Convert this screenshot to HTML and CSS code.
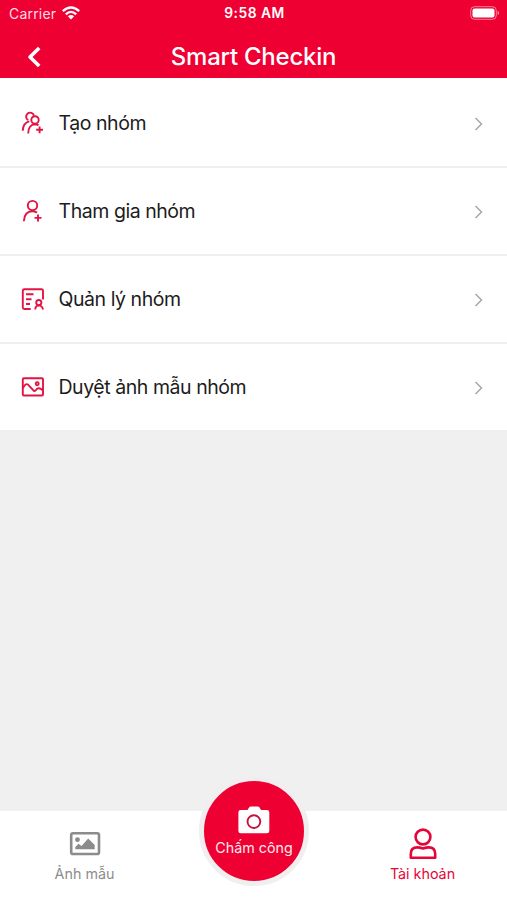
FILE: index.html
```html
<!DOCTYPE html>
<html lang="vi">
<head>
<meta charset="utf-8">
<title>Smart Checkin</title>
<link rel="stylesheet" href="styles.css">
</head>
<body>
<div class="app">
  <header class="header">
    <div class="status">
      <div class="carrier"><span>Carrier</span>
        <svg width="18" height="14" viewBox="0 0 18 14" fill="none" stroke="#fff" stroke-width="2.3"><path d="M.8 5.2Q9-2.2 17.2 5.2M3.8 8.3Q9 3.4 14.2 8.3"/><path d="M5.8 10.3Q9 7.5 12.2 10.3L9 13.6Z" fill="#fff" stroke="none"/></svg>
      </div>
      <span class="time">9:58 AM</span>
      <svg class="battery" width="30" height="14" viewBox="0 0 30 14"><rect x=".7" y=".7" width="25.6" height="12.6" rx="3.8" fill="none" stroke="#fff" stroke-opacity=".5"/><rect x="2.5" y="2.5" width="22" height="9" rx="2" fill="#fff"/><path d="M27.7 4.8Q30.6 7 27.7 9.2Z" fill="#fff" fill-opacity=".6"/></svg>
    </div>
    <div class="nav">
      <svg class="back" width="16" height="24" viewBox="0 0 16 24" fill="none" stroke="#fff" stroke-width="3.6" stroke-linejoin="round"><path d="M13.2 3L4 12l9.2 9"/></svg>
      <h1 class="title">Smart Checkin</h1>
    </div>
  </header>
  <main class="list">
    <div class="row">
      <svg class="icon" width="24" height="24" viewBox="0 0 24 24"><path d="M8.2 9.2A4 4 0 1 1 14 4.7M2.7 19.8C3 14.5 5 11.3 9.3 10.4M8.2 22.4C8.2 17 10.8 13.4 15 13.2Q17 13.2 18.5 14.3M19.6 15.4v6.8M16.2 18.8H23"/><circle cx="15" cy="8.9" r="3.7"/></svg>
      <span class="label">Tạo nhóm</span>
      <svg class="chevron" width="10" height="14" viewBox="0 0 10 14"><path d="M1.5 1l6 6-6 6"/></svg>
    </div>
    <div class="row">
      <svg class="icon" width="24" height="24" viewBox="0 0 24 24"><circle cx="12.5" cy="6.6" r="4.7"/><path d="M3.8 22.3C4.2 16 7.2 12.2 12.4 12.2Q15 12.2 17 13.6M18 15.4v7M14.5 18.9h7"/></svg>
      <span class="label">Tham gia nhóm</span>
      <svg class="chevron" width="10" height="14" viewBox="0 0 10 14"><path d="M1.5 1l6 6-6 6"/></svg>
    </div>
    <div class="row">
      <svg class="icon" width="24" height="24" viewBox="0 0 24 24"><path d="M10.7 22H4.3Q2.8 22 2.8 20.5V3.7Q2.8 2.2 4.3 2.2H21.5Q23 2.2 23 3.7V12.5M6 7.2h7.5M6 12.2h5.5M6 17h4M15.2 22.5q.2-3.8 3.6-4.1 3.6.3 4.2 4.1"/><circle cx="18.8" cy="15.6" r="2.6"/></svg>
      <span class="label">Quản lý nhóm</span>
      <svg class="chevron" width="10" height="14" viewBox="0 0 10 14"><path d="M1.5 1l6 6-6 6"/></svg>
    </div>
    <div class="row">
      <svg class="icon" width="24" height="24" viewBox="0 0 24 24"><rect x="2.8" y="3.2" width="20.2" height="17.3" rx="1"/><path d="M3 13Q5.6 7.8 8 9.6L14 16Q15 16.4 17 13.8 19.5 12.2 22.8 15.4"/><circle cx="17.2" cy="8.8" r="1.5"/></svg>
      <span class="label">Duyệt ảnh mẫu nhóm</span>
      <svg class="chevron" width="10" height="14" viewBox="0 0 10 14"><path d="M1.5 1l6 6-6 6"/></svg>
    </div>
  </main>
  <footer class="tabs">
    <div class="tab">
      <svg width="32" height="34" viewBox="0 0 32 34"><rect x="2.2" y="6.2" width="27.8" height="20.8" rx="1.8" fill="none" stroke="#8c8c8c" stroke-width="2.6"/><circle cx="8.5" cy="12.7" r="2.4" fill="#8c8c8c"/><path d="M6.3 22.3v-2.4l3.2-3.2 3 2.2 6.7-7.3 2.5 2.5 4 4V22.3Z" fill="#8c8c8c"/></svg>
      <span class="tabtext">Ảnh mẫu</span>
    </div>
    <div class="tab active">
      <svg width="32" height="34" viewBox="0 0 32 34" fill="none" stroke="#e60538" stroke-width="2.6"><circle cx="16" cy="10" r="7.4"/><path d="M3.8 30.7v-3.8Q3.8 20.4 10.2 20.4 12.6 20.4 16 21.5 19.4 20.4 21.8 20.4 28.2 20.4 28.2 26.9v3.8Z" stroke-linejoin="round"/></svg>
      <span class="tabtext">Tài khoản</span>
    </div>
    <div class="checkin">
      <svg width="32" height="28" viewBox="0 0 32 28"><path d="M2.5 4H9.5L11.2 1.2Q11.8.4 12.8.4h7Q20.8.4 21.4 1.2L23 4h6q2.3 0 2.3 2.3V24.9q0 2.3-2.3 2.3H2.7Q.4 27.2.4 24.9V6.3Q.4 4 2.5 4Z" fill="#fff"/><circle cx="15.9" cy="15.6" r="6.4" fill="none" stroke="#c9103d" stroke-width="1.9"/></svg>
      <span class="tabtext">Chấm công</span>
    </div>
  </footer>
</div>
</body>
</html>
```

FILE: styles.css
```css
* { box-sizing: border-box; }
body { margin: 0; font-family: Inter, "Liberation Sans", sans-serif; }
.app { width: 507px; height: 900px; display: flex; flex-direction: column; background: #f0f0f0; overflow: hidden; }
svg { display: block; flex: none; }
.header { height: 78px; background: #ee0033; color: #fff; }
.status { height: 28px; padding: 0 7px 0 9px; display: grid; grid-template-columns: 1fr auto 1fr; align-items: center; font-size: 14px; letter-spacing: .2px; }
.carrier { display: flex; align-items: center; gap: 6px; color: #ffdce3; margin-top: -2px; }
.time { font-weight: 600; font-size: 13.8px; letter-spacing: .5px; margin-top: -2px; }
.battery { justify-self: end; margin-top: -2px; }
.nav { height: 50px; padding: 0 26px; display: grid; grid-template-columns: 1fr auto 1fr; align-items: center; }
.back { margin-top: 8px; }
.title { margin: 8px 0 0; font-size: 24px; line-height: 28px; font-weight: 500; letter-spacing: -.25px; white-space: nowrap; }
.list { background: #fff; padding-top: 2px; }
.row { height: 88px; display: flex; align-items: center; padding: 0 23px 0 20px; border-bottom: 2px solid #f0f0f0; }
.icon { fill: none; stroke: #e31443; stroke-width: 1.9; }
.label { flex: 1; margin: -1px 0 0 14.5px; font-size: 19.5px; line-height: 26px; letter-spacing: -.45px; color: #1c1c1c; white-space: nowrap; }
.chevron { fill: none; stroke: #a3a3a3; stroke-width: 1.4; margin-top: 2px; }
.tabs { position: relative; margin-top: auto; height: 89px; background: #fff; display: grid; grid-template-columns: 1fr 1fr 1fr; }
.tab { display: flex; flex-direction: column; align-items: center; padding-top: 16px; color: #8c8c8c; }
.tab.active { grid-column: 3; color: #e60538; }
.tabtext { font-size: 14.3px; line-height: 18px; white-space: nowrap; }
.tab .tabtext { margin-top: 4px; }
.checkin { position: absolute; left: 199px; top: -35px; width: 110px; height: 110px; border: 5px solid #f0eeee; border-radius: 50%; background: #ee0033; color: #ffe7ec; display: flex; flex-direction: column; align-items: center; padding-top: 25px; }
.checkin .tabtext { margin-top: 5px; }
```
